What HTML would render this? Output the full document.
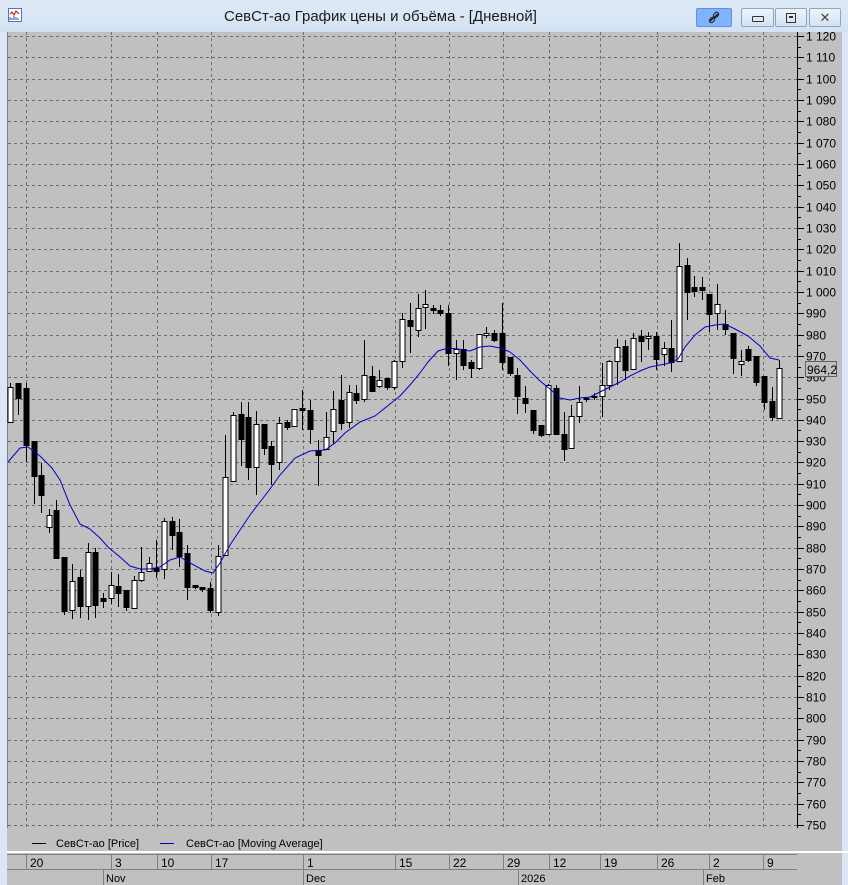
<!DOCTYPE html>
<html><head><meta charset="utf-8"><style>
body{margin:0;width:848px;height:885px;overflow:hidden;background:#dbe7f5;font-family:"Liberation Sans","DejaVu Sans",sans-serif;}
#title{position:absolute;left:0;top:0;width:848px;height:32px;background:linear-gradient(#dfeaf7,#d3e2f3);}
#title .t{position:absolute;left:224px;top:8px;font-size:15px;color:#1a1a1a;white-space:nowrap;}
.btn{position:absolute;top:8px;height:17px;border:1px solid #8ea4c0;border-radius:2px;background:linear-gradient(#eef4fb,#d5e2f1);}
#main{position:absolute;left:7px;top:32px;width:835px;height:853px;background:#c0c0c0;}
svg text{font-family:"Liberation Sans",sans-serif;}
</style></head><body>
<div id="title">
 <svg style="position:absolute;left:8px;top:8px" width="14" height="14"><rect x="0.5" y="0.5" width="13" height="13" fill="#fff" stroke="#4a78b0"/><path d="M2 6 L4 4 L6 7 L8 3 L11 6" stroke="#c00" fill="none"/><path d="M2 12V9M4 12V10M6 12V8M8 12V9M10 12V10" stroke="#2050a0"/></svg>
 <div class="t">СевСт-ао График цены и объёма - [Дневной]</div>
 <div class="btn" style="left:696px;width:34px;background:#7fb2ff;border-color:#6a90c8"><svg width="34" height="17"><path d="M13 12 L21 5" stroke="#222" stroke-width="1.5"/><rect x="17" y="3" width="4" height="6" rx="2" transform="rotate(45 19 6)" fill="none" stroke="#222"/><rect x="13" y="8" width="4" height="6" rx="2" transform="rotate(45 15 11)" fill="none" stroke="#222"/></svg></div>
 <div class="btn" style="left:741px;width:31px"><div style="position:absolute;left:10px;top:7px;width:10px;height:4px;border:1px solid #333;border-radius:1px"></div></div>
 <div class="btn" style="left:775px;width:30px"><div style="position:absolute;left:10px;top:4px;width:8px;height:8px;border:1px solid #333"><div style="margin:2px;width:4px;height:2px;background:#333"></div></div></div>
 <div class="btn" style="left:809px;width:30px;text-align:center;font-size:13px;line-height:17px;color:#444">✕</div>
</div>
<div id="main"></div>
<svg id="s" style="position:absolute;left:0;top:0" width="848" height="885"></svg>
<script>
var s='';
function L(x1,y1,x2,y2,c,d){s+='<line x1="'+x1+'" y1="'+y1+'" x2="'+x2+'" y2="'+y2+'" stroke="'+c+'"'+(d?' stroke-dasharray="3,3"':'')+'/>';}
function T(x,y,t,sz,a){s+='<text x="'+x+'" y="'+y+'" font-size="'+(sz||12)+'"'+(a?' text-anchor="'+a+'"':'')+' fill="#000">'+t+'</text>';}
L(7.5,32,7.5,828,'#808080');
for(var i=0;i<=37;i++){var y=Math.round(36+i*21.324)+0.5;L(8,y,797,y,'#6e6e6e',1);L(797,y,804,y,'#000');var v=1120-i*10;var lab=v>=1000?'1 '+String(v).slice(1):String(v);T(806,y+4,lab,12);
 if(i<37){var y2=Math.round(36+(i+0.5)*21.324)+0.5;L(797,y2,801,y2,'#000');}}
L(797.5,32,797.5,828,'#000');
var vx=[26,111,157,211,303,395,449,503,549,600,657,709,763];
vx.forEach(function(x){L(x+0.5,32,x+0.5,828,'#6e6e6e',1);});
var c=[[10,387,422,383,422,1],[18,383,398,383,415,0],[26,388,445,383,462,0],[34,441,476,441,504,0],[41,475,495,463,513,0],[49,515,527,509,533,1],[56,510,558,500,558,0],[64,557,611,557,615,0],[72,581,610,564,619,1],[80,577,606,570,618,0],[88,552,606,543,620,1],[95,552,605,548,618,0],[103,598,601,593,608,0],[111,585,598,572,604,1],[118,586,593,574,607,0],[126,590,607,590,611,0],[134,580,608,576,608,1],[141,572,580,547,582,1],[149,563,571,557,571,1],[156,568,571,540,578,0],[164,521,569,518,579,1],[172,521,535,517,550,0],[179,532,556,519,567,0],[187,553,587,545,600,0],[195,585,587,585,589,0],[202,587,589,587,592,0],[210,588,610,582,613,0],[218,556,612,545,616,1],[225,477,555,435,555,1],[233,415,481,412,481,1],[241,414,439,402,466,0],[248,417,467,402,480,0],[256,424,467,411,495,1],[264,424,448,424,455,0],[271,446,464,441,485,0],[279,423,462,417,470,1],[287,422,427,420,430,0],[294,409,426,409,426,1],[302,408,410,390,430,0],[310,410,429,400,444,0],[318,450,455,440,486,0],[326,437,449,412,450,1],[333,409,431,391,444,1],[341,400,423,375,430,0],[349,392,422,385,428,1],[356,393,400,385,404,0],[364,375,399,340,402,1],[372,376,391,366,392,0],[379,380,386,370,388,1],[387,378,387,378,390,0],[394,361,387,360,390,1],[402,319,361,313,368,1],[410,320,326,303,353,0],[418,308,330,294,337,1],[425,304,307,290,329,1],[433,308,310,305,314,0],[440,310,313,305,316,0],[448,313,353,305,366,0],[456,349,353,340,380,1],[463,349,365,340,370,0],[471,362,368,360,378,0],[479,334,368,334,370,1],[486,333,335,327,338,1],[494,333,340,330,342,0],[502,333,362,303,370,0],[510,357,373,357,376,0],[517,375,396,368,414,0],[525,398,403,386,413,0],[533,410,430,410,434,0],[541,425,435,425,437,0],[548,385,434,384,435,1],[556,388,434,385,435,0],[564,434,449,412,461,0],[571,416,448,405,449,1],[579,402,416,386,423,1],[586,398,399,397,402,0],[594,396,397,393,400,0],[602,385,396,363,417,1],[609,361,385,360,390,1],[617,347,361,339,385,1],[625,346,370,340,380,0],[633,338,369,333,370,1],[641,336,341,330,362,0],[648,336,338,332,350,1],[656,336,359,332,370,0],[664,348,354,342,366,1],[671,348,362,320,372,0],[679,266,361,243,361,1],[687,265,292,258,320,0],[694,287,291,276,297,0],[702,287,290,277,300,0],[709,294,314,294,332,0],[717,304,313,284,330,1],[725,324,329,310,335,0],[733,333,358,333,374,0],[741,361,364,350,376,1],[748,349,360,346,362,0],[756,356,382,356,386,0],[764,376,402,376,410,0],[772,401,417,387,421,0],[779,368,418,360,418,1]];
c.forEach(function(k){L(k[0]+0.5,k[3],k[0]+0.5,k[4],'#000');var h=Math.max(k[2]-k[1],1);
 s+='<rect x="'+(k[0]-2)+'" y="'+(k[1]+0.5)+'" width="5" height="'+h+'" fill="'+(k[5]?'#fff':'#000')+'" stroke="#000"/>';});
var ma=[[8,462],[20,448],[28,447],[40,456],[52,468],[60,480],[70,505],[80,524],[90,529],[100,538],[108,547],[120,557],[130,566],[140,569],[150,569],[160,567],[170,560],[180,557],[190,563],[205,571],[213,573],[220,563],[230,545],[240,530],[250,515],[260,502],[270,489],[280,475],[295,458],[310,451],[325,450],[335,443],[345,433],[360,422],[375,416],[390,404],[400,396],[410,385],[420,373],[428,362],[438,351],[448,348],[458,349],[470,351],[480,347],[490,346],[500,348],[510,352],[520,360],[530,371],[540,381],[550,389],[560,398],[570,400],[580,398],[590,397],[600,392],[610,387],[620,382],[630,376],[640,371],[650,367],[660,365],[670,363],[678,359],[685,347],[695,335],[705,327],[715,325],[725,324],[735,329],[748,336],[760,346],[770,358],[779,360]];
s+='<polyline fill="none" stroke="#0000c8" points="'+ma.map(function(p){return p.join(',')}).join(' ')+'"/>';
s+='<rect x="805.5" y="361.5" width="31" height="15" fill="#c0c0c0" stroke="#606060"/>';T(807,374,'964,2',12);
L(32,843.5,46,843.5,'#000');T(56,847,'СевСт-ао [Price]',11);
L(160,843.5,174,843.5,'#0000c8');T(186,847,'СевСт-ао [Moving Average]',11);
s+='<rect x="7" y="851" width="841" height="2" fill="#fff"/>';
L(7,854.5,797,854.5,'#808080');L(7,869.5,797,869.5,'#808080');
var d=[[26,'20'],[111,'3'],[157,'10'],[211,'17'],[303,'1'],[395,'15'],[449,'22'],[503,'29'],[549,'12'],[600,'19'],[657,'26'],[709,'2'],[763,'9']];
d.forEach(function(k){L(k[0]+0.5,855,k[0]+0.5,869,'#808080');T(k[0]+4,867,k[1],12);});
[[103,'Nov'],[303,'Dec'],[518,'2026'],[703,'Feb']].forEach(function(k){L(k[0]+0.5,870,k[0]+0.5,885,'#808080');T(k[0]+3,882,k[1],11);});
document.getElementById('s').innerHTML=s;
</script>
</body></html>
